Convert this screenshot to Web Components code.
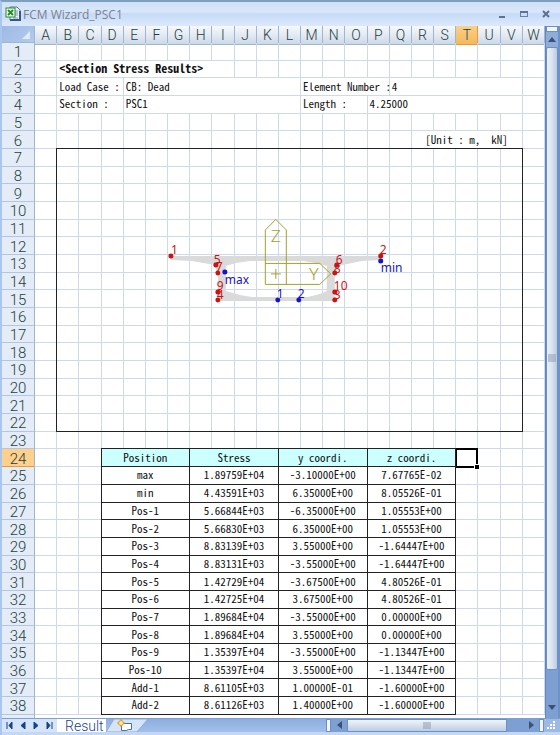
<!DOCTYPE html>
<html lang="en">
<head>
<meta charset="utf-8">
<title>FCM Wizard_PSC1</title>
<style>
	body { margin: 0; }
</style>
</head>
<body>
<excel-window title="FCM Wizard_PSC1">
	<work-sheet cols="23" rows="38" active-col="T" active-row="24">
		<sheet-text at="2 / 2 / span 1 / span 8" bold>&lt;Section Stress Results&gt;</sheet-text>
		<sheet-text at="3 / 2 / span 1 / span 3">Load Case :</sheet-text>
		<sheet-text at="3 / 5 / span 1 / span 8">CB: Dead</sheet-text>
		<sheet-text at="3 / 13 / span 1 / span 4">Element Number :</sheet-text>
		<sheet-text at="3 / 17 / span 1 / span 6">4</sheet-text>
		<sheet-text at="4 / 2 / span 1 / span 3">Section :</sheet-text>
		<sheet-text at="4 / 5 / span 1 / span 8">PSC1</sheet-text>
		<sheet-text at="4 / 13 / span 1 / span 3">Length :</sheet-text>
		<sheet-text at="4 / 16 / span 1 / span 7">4.25000</sheet-text>
		<sheet-text at="6 / 18 / span 1 / span 5" end>[Unit : m,&nbsp; kN]</sheet-text>
		<section-plot at="7 / 2 / span 16 / span 21"></section-plot>
		<stress-table at="24 / 4 / span 15 / span 16"></stress-table>
		<cell-cursor at="24 / 20 / span 1 / span 1"></cell-cursor>
	</work-sheet>
	<scroll-bar slot="scroll"></scroll-bar>
	<sheet-tabs slot="tabs">Result</sheet-tabs>
</excel-window>

<script>
/* outer window: title bar, sheet, scroll bar on the right, tabs below */
class ExcelWindow extends HTMLElement {
	connectedCallback() {
		let title = this.getAttribute('title');
		this.attachShadow({ mode: 'open' })
		this.shadowRoot.innerHTML = `
		<style>
			:host {
				display: flex;
				flex-direction: column;
				box-sizing: border-box;
				min-height: 100vh;
				border-top: 2px solid #7f9fbe;
				border-left: 2px solid #a9c7ee;
				background: #bfd6f6;
			}
			.bar {
				display: flex;
				align-items: center;
				height: 24px;
				padding: 0 6px 0 3px;
				gap: 2px;
				background: linear-gradient(#cfe0f5, #d9e7fa 40%, #c6dbf8 50%, #dce9fb);
			}
			.bar__title {
				flex: 1;
				margin: 0;
				font: 12px 'Open Sans', sans-serif;
				color: #7b828c;
			}
			.bar__buttons { display: flex; gap: 6px; }
			button {
				display: block;
				width: 16px;
				height: 16px;
				padding: 0;
				border: 0;
				background: none;
			}
			svg { display: block; }
			.main { display: flex; flex: 1; }
		</style>
		<header class="bar">
			<svg width="16" height="16" viewBox="0 0 16 16">
				<path d="M5 1h7l3 3v10H5z" fill="#e9f1fb" stroke="#5672a0"/>
				<path d="M5 14h10V5" fill="none" stroke="#39558a" stroke-width="2"/>
				<path d="M10 5h3M10 7h3M10 9h3M8 12h5" stroke="#7f98c0"/>
				<rect x="1" y="2" width="9" height="9" fill="#f4fbf0" stroke="#2b8a2b"/>
				<path d="M3 4l5 5M8 4l-5 5" stroke="#1f8f26" stroke-width="2"/>
			</svg>
			<h1 class="bar__title">${title}</h1>
			<div class="bar__buttons">
				<button aria-label="Minimize"><svg width="16" height="16"><path d="M5 11h6" stroke="#5f6f8c" stroke-width="2"/></svg></button>
				<button aria-label="Restore"><svg width="16" height="16"><rect x="4.500" y="5.500" width="7" height="5" fill="none" stroke="#6c7fa2"/><path d="M4 6h8" stroke="#5f7196" stroke-width="2"/></svg></button>
				<button aria-label="Close"><svg width="16" height="16"><path d="M5 5l6 6M11 5l-6 6" stroke="#5f6f8c" stroke-width="2"/></svg></button>
			</div>
		</header>
		<div class="main"><slot></slot><slot name="scroll"></slot></div>
		<slot name="tabs"></slot>
		`;
	}
}
window.customElements.define('excel-window', ExcelWindow)

/* headers and grid lines; children are placed with at='row / col / span / span' */
class WorkSheet extends HTMLElement {
	connectedCallback() {
		let cols = Number(this.getAttribute('cols'));
		let rows = Number(this.getAttribute('rows'));
		let activeCol = this.getAttribute('active-col');
		let activeRow = this.getAttribute('active-row');
		let heads = '', nums = '', cells = '';
		for (let c = 0; c < cols; c++) {
			let name = String.fromCharCode(65 + c);
			heads += `<div class="head${name == activeCol ? ' active' : ''}">${name}</div>`;
		}
		for (let r = 1; r <= rows; r++) {
			nums += `<div class="num${r == activeRow ? ' active' : ''}">${r}</div>`;
			for (let c = 1; c <= cols; c++) {
				cells += `<i style="grid-area: ${r} / ${c}"></i>`;
			}
		}
		this.attachShadow({ mode: 'open' })
		this.shadowRoot.innerHTML = `
		<style>
			:host {
				flex: 1;
				display: grid;
				grid-template: 17px 1fr / 33px 1fr;
				min-width: 0;
				background: #fff;
				font-family: Roboto, sans-serif;
				font-weight: 300;
				color: #1d4040;
			}
			.corner {
				background: linear-gradient(135deg, #9db9e4, #b3caee);
				border-right: 1px solid #9eb6ce;
				border-bottom: 1px solid #9eb6ce;
			}
			.corner svg { display: block; margin: 5px 4px 0 auto; }
			.heads {
				display: grid;
				grid-template-columns: repeat(${cols}, minmax(0, 1fr));
			}
			.head {
				border-right: 1px solid #9eb6ce;
				border-bottom: 1px solid #9eb6ce;
				background: linear-gradient(#f6f9fc, #dfe7f1 60%, #ccd8e8);
				font-size: 14px;
				line-height: 18px;
				text-align: center;
			}
			.nums, .cells {
				display: grid;
				grid-template-rows: repeat(${rows}, minmax(17px, 1fr));
				padding-bottom: 3px;
			}
			.nums { background: #e4ecf7; border-right: 1px solid #9eb6ce; }
			.num {
				display: flex;
				align-items: center;
				justify-content: center;
				padding-top: 2px;
				border-bottom: 1px solid #b3c6dd;
				font-size: 15px;
				line-height: 14px;
			}
			.head.active { background: linear-gradient(#fbd08a, #f2b95c); border-color: #f29536; }
			.num.active { background: #fdd08b; border-color: #f29536; }
			.cells { grid-template-columns: repeat(${cols}, minmax(0, 1fr)); }
			i, ::slotted(sheet-text) {
				border-right: 1px solid #d0d9ec;
				border-bottom: 1px solid #d0d9ec;
			}
		</style>
		<div class="corner"><svg width="8" height="8"><path d="M8 0v8H0z" fill="#dfe9f7"/></svg></div>
		<div class="heads">${heads}</div>
		<div class="nums">${nums}</div>
		<div class="cells">${cells}<slot></slot></div>
		`;
		for (let child of this.children) {
			child.style.gridArea = child.getAttribute('at');
		}
	}
}
window.customElements.define('work-sheet', WorkSheet)

class SheetText extends HTMLElement {
	connectedCallback() {
		this.attachShadow({ mode: 'open' })
		this.shadowRoot.innerHTML = `
		<style>
			:host {
				display: flex;
				align-items: center;
				min-width: 0;
				padding: 0 2px 2px;
				background: #fff;
				font: 11px/14px 'Noto Sans Mono CJK KR', 'Liberation Mono', monospace;
				color: #111;
				white-space: nowrap;
			}
			:host([bold]) { font-weight: bold; font-size: 12px; }
			:host([end]) { justify-content: flex-end; padding-right: 14px; }
		</style>
		<slot></slot>
		`;
	}
}
window.customElements.define('sheet-text', SheetText)

/* box girder section with axes and stress points */
class SectionPlot extends HTMLElement {
	connectedCallback() {
		let red = [
			[171, 256, '1', 171, 254], [381, 256, '2', 380, 254],
			[216, 265, '5', 214, 264], [218, 273, '7', 216, 271],
			[218, 292, '9', 217, 290], [218, 300, '4', 217, 299],
			[337, 265, '6', 336, 264], [335, 273, '8', 334, 273],
			[335, 292, '10', 334, 290], [335, 300, '3', 334, 299]
		];
		let blue = [
			[381, 261, 'min', 381, 272], [225, 272, 'max', 225, 284],
			[278, 300, '1', 277, 298], [299, 300, '2', 298, 298]
		];
		let draw = ([x, y, name, tx, ty]) => `<circle cx="${x}" cy="${y}" r="2.5"/><text x="${tx}" y="${ty}">${name}</text>`;
		this.attachShadow({ mode: 'open' })
		this.shadowRoot.innerHTML = `
		<style>
			:host {
				display: flex;
				min-width: 0;
				min-height: 0;
				margin: -1px 0 0 -1px;
				border: 1px solid #222;
			}
			svg { flex: 1; width: 100%; min-width: 0; height: 100%; font: 12px 'Noto Sans', sans-serif; }
			.axes { fill: none; stroke: #a3a329; }
			.axes text { fill: #a3a329; stroke: none; font: 300 17px Roboto, sans-serif; }
			.red { fill: #c81414; }
			.blue { fill: #1414c8; }
		</style>
		<svg viewBox="57 149 465 282" role="img" aria-label="Section">
			<path fill="#dadada" fill-rule="evenodd" d="M171 256H381V260L362 261L338 266L335 275V301H218V275L215 265L192 261L171 260Z
				M226 266V291L240 295L252 297H308L320 294L327 291V266L316 263L303 261H250L236 263Z"/>
			<g class="axes">
				<path d="M265.500 284.500V230L276 219.500L286.500 230V284.500"/>
				<path d="M265.500 263.500H320L331 274L320 284.500H265.500"/>
				<path d="M271 274H281M276 269V279"/>
				<text x="271" y="242">Z</text>
				<text x="309" y="280">Y</text>
			</g>
			<g class="red">${red.map(draw).join('')}</g>
			<g class="blue">${blue.map(draw).join('')}</g>
		</svg>
		`;
	}
}
window.customElements.define('section-plot', SectionPlot)

class StressTable extends HTMLElement {
	connectedCallback() {
		let data = [
			['max', '1.89759E+04', '-3.10000E+00', '7.67765E-02'],
			['min', '4.43591E+03', '6.35000E+00', '8.05526E-01'],
			['Pos-1', '5.66844E+03', '-6.35000E+00', '1.05553E+00'],
			['Pos-2', '5.66830E+03', '6.35000E+00', '1.05553E+00'],
			['Pos-3', '8.83139E+03', '3.55000E+00', '-1.64447E+00'],
			['Pos-4', '8.83131E+03', '-3.55000E+00', '-1.64447E+00'],
			['Pos-5', '1.42729E+04', '-3.67500E+00', '4.80526E-01'],
			['Pos-6', '1.42725E+04', '3.67500E+00', '4.80526E-01'],
			['Pos-7', '1.89684E+04', '-3.55000E+00', '0.00000E+00'],
			['Pos-8', '1.89684E+04', '3.55000E+00', '0.00000E+00'],
			['Pos-9', '1.35397E+04', '-3.55000E+00', '-1.13447E+00'],
			['Pos-10', '1.35397E+04', '3.55000E+00', '-1.13447E+00'],
			['Add-1', '8.61105E+03', '1.00000E-01', '-1.60000E+00'],
			['Add-2', '8.61126E+03', '1.40000E+00', '-1.60000E+00']
		];
		let body = data.map(row => `<tr>${row.map(v => `<td>${v}</td>`).join('')}</tr>`).join('');
		this.attachShadow({ mode: 'open' })
		this.shadowRoot.innerHTML = `
		<style>
			:host { display: grid; margin: -1px 0 0 -1px; min-width: 0; }
			table {
				width: 100%;
				height: 100%;
				table-layout: fixed;
				border-collapse: collapse;
				background: #fff;
				font: 11px/14px 'Noto Sans Mono CJK KR', 'Liberation Mono', monospace;
				color: #111;
			}
			tr { height: 16px; }
			th, td {
				padding: 0 0 2px;
				border: 1px solid #222;
				font-weight: normal;
				text-align: center;
			}
			th { background: #ccffff; }
		</style>
		<table>
			<tbody>
				<tr><th>Position</th><th>Stress</th><th>y coordi.</th><th>z coordi.</th></tr>
				${body}
			</tbody>
		</table>
		`;
	}
}
window.customElements.define('stress-table', StressTable)

class CellCursor extends HTMLElement {
	connectedCallback() {
		this.attachShadow({ mode: 'open' })
		this.shadowRoot.innerHTML = `
		<style>
			:host {
				display: flex;
				align-items: flex-end;
				justify-content: flex-end;
				margin: -1px 0 -1px 0;
				border: 2px solid #000;
				border-left-width: 1px;
			}
			.handle {
				width: 4px;
				height: 4px;
				margin: 0 -3px -3px 0;
				background: #000;
				outline: 1px solid #fff;
			}
		</style>
		<div class="handle"></div>
		`;
	}
}
window.customElements.define('cell-cursor', CellCursor)

class ScrollBar extends HTMLElement {
	connectedCallback() {
		this.attachShadow({ mode: 'open' })
		this.shadowRoot.innerHTML = `
		<style>
			:host {
				display: flex;
				flex-direction: column;
				width: 12px;
				border-left: 1px solid #5f86bd;
				border-right: 2px solid #6d92cc;
				background: #7d9fd2;
			}
			.split { height: 4px; border: 1px solid #6d8fc2; background: #f2f6fc; }
			button {
				height: 15px;
				padding: 0;
				border: 0;
				background: #8fadd9;
			}
			button.down { height: 20px; background: none; }
			svg { display: block; margin: auto; }
			.thumb {
				flex: 1;
				display: flex;
				align-items: center;
				justify-content: center;
				border: 1px solid #6d8fc2;
				border-radius: 2px;
				background: linear-gradient(90deg, #eaf0f8, #dbe3ee 50%, #b9cbe4);
			}
			.track { height: 28px; }
		</style>
		<div class="split"></div>
		<button aria-label="Scroll up"><svg width="8" height="5"><path d="M0 5l4-5l4 5z" fill="#3c5077"/></svg></button>
		<div class="thumb"><svg width="8" height="8"><path d="M0 1h8M0 3h8M0 5h8M0 7h8" stroke="#8d99ad"/></svg></div>
		<div class="track"></div>
		<button class="down" aria-label="Scroll down"><svg width="8" height="5"><path d="M0 0l4 5l4-5z" fill="#3c5077"/></svg></button>
		`;
	}
}
window.customElements.define('scroll-bar', ScrollBar)

/* bottom strip: tab arrows, sheet tabs, horizontal scroll */
class SheetTabs extends HTMLElement {
	connectedCallback() {
		let arrows = {
			'First sheet': 'M1 0v7M6 0v7L3 3.500z',
			'Previous sheet': 'M6 0v7L2 3.500z',
			'Next sheet': 'M2 0v7L6 3.500z',
			'Last sheet': 'M2 0v7L5 3.500zM7 0v7'
		};
		let nav = Object.keys(arrows).map(name => `
			<button aria-label="${name}"><svg width="8" height="7"><path d="${arrows[name]}" fill="#15428b" stroke="#15428b"/></svg></button>`).join('');
		this.attachShadow({ mode: 'open' })
		this.shadowRoot.innerHTML = `
		<style>
			:host {
				display: flex;
				height: 13px;
				border-top: 1px solid #7d9fd2;
				border-bottom: 4px solid #c3d8f5;
				background: linear-gradient(#8fafe0, #a3bfe9);
			}
			button { padding: 0; border: 0; background: none; }
			svg { display: block; }
			.nav {
				display: flex;
				gap: 5px;
				padding: 0 4px;
				background: #d6e4f7;
			}
			.tab {
				padding: 0 2px 0 8px;
				background: #fff;
				font: 300 14px/14px Roboto, sans-serif;
				color: #15428b;
				text-decoration: none;
			}
			.space { flex: 1; }
			.split { width: 3px; border: 1px solid #6d8fc2; background: #f2f6fc; }
			.scroll {
				display: flex;
				width: 39%;
				background: #7d9fd2;
			}
			.scroll button { width: 16px; }
			.scroll svg { margin: auto; }
			.thumb {
				flex: 1;
				display: flex;
				border: 1px solid #6d8fc2;
				background: linear-gradient(#f0f4fa, #d8e1ed 50%, #bccde4);
			}
			.track { width: 16px; }
			.grip { width: 16px; background: #9db9e4; }
		</style>
		<div class="nav">${nav}</div>
		<a class="tab" href="#result"><slot></slot></a>
		<button aria-label="Insert sheet">
			<svg width="42" height="13" viewBox="0 0 42 13">
				<path d="M0 13L8 0H42L31 13z" fill="#d6e4f7" stroke="#8fabd4"/>
				<path d="M15.500 4.500h10v6h-3l-2 1h-5z" fill="#fff" stroke="#4f6fa3"/>
				<path d="M15 0v8M11 4h8" stroke="#e8951e"/>
				<circle cx="15" cy="4" r="2.500" fill="#fde9a8" stroke="#e8951e"/>
			</svg>
		</button>
		<div class="space"></div>
		<div class="scroll">
			<div class="split"></div>
			<button aria-label="Scroll left"><svg width="5" height="8"><path d="M5 0v8L0 4z" fill="#3c5077"/></svg></button>
			<div class="thumb"><svg width="8" height="7"><path d="M1 0v7M3 0v7M5 0v7M7 0v7" stroke="#8d99ad"/></svg></div>
			<div class="track"></div>
			<button aria-label="Scroll right"><svg width="5" height="8"><path d="M0 0v8L5 4z" fill="#3c5077"/></svg></button>
			<div class="split"></div>
		</div>
		<div class="grip"><svg width="12" height="12"><path d="M9 3h2M6 6h2M9 6h2M3 9h2M6 9h2M9 9h2" stroke="#fff" stroke-width="2"/></svg></div>
		`;
	}
}
window.customElements.define('sheet-tabs', SheetTabs)
</script>
</body>
</html>
